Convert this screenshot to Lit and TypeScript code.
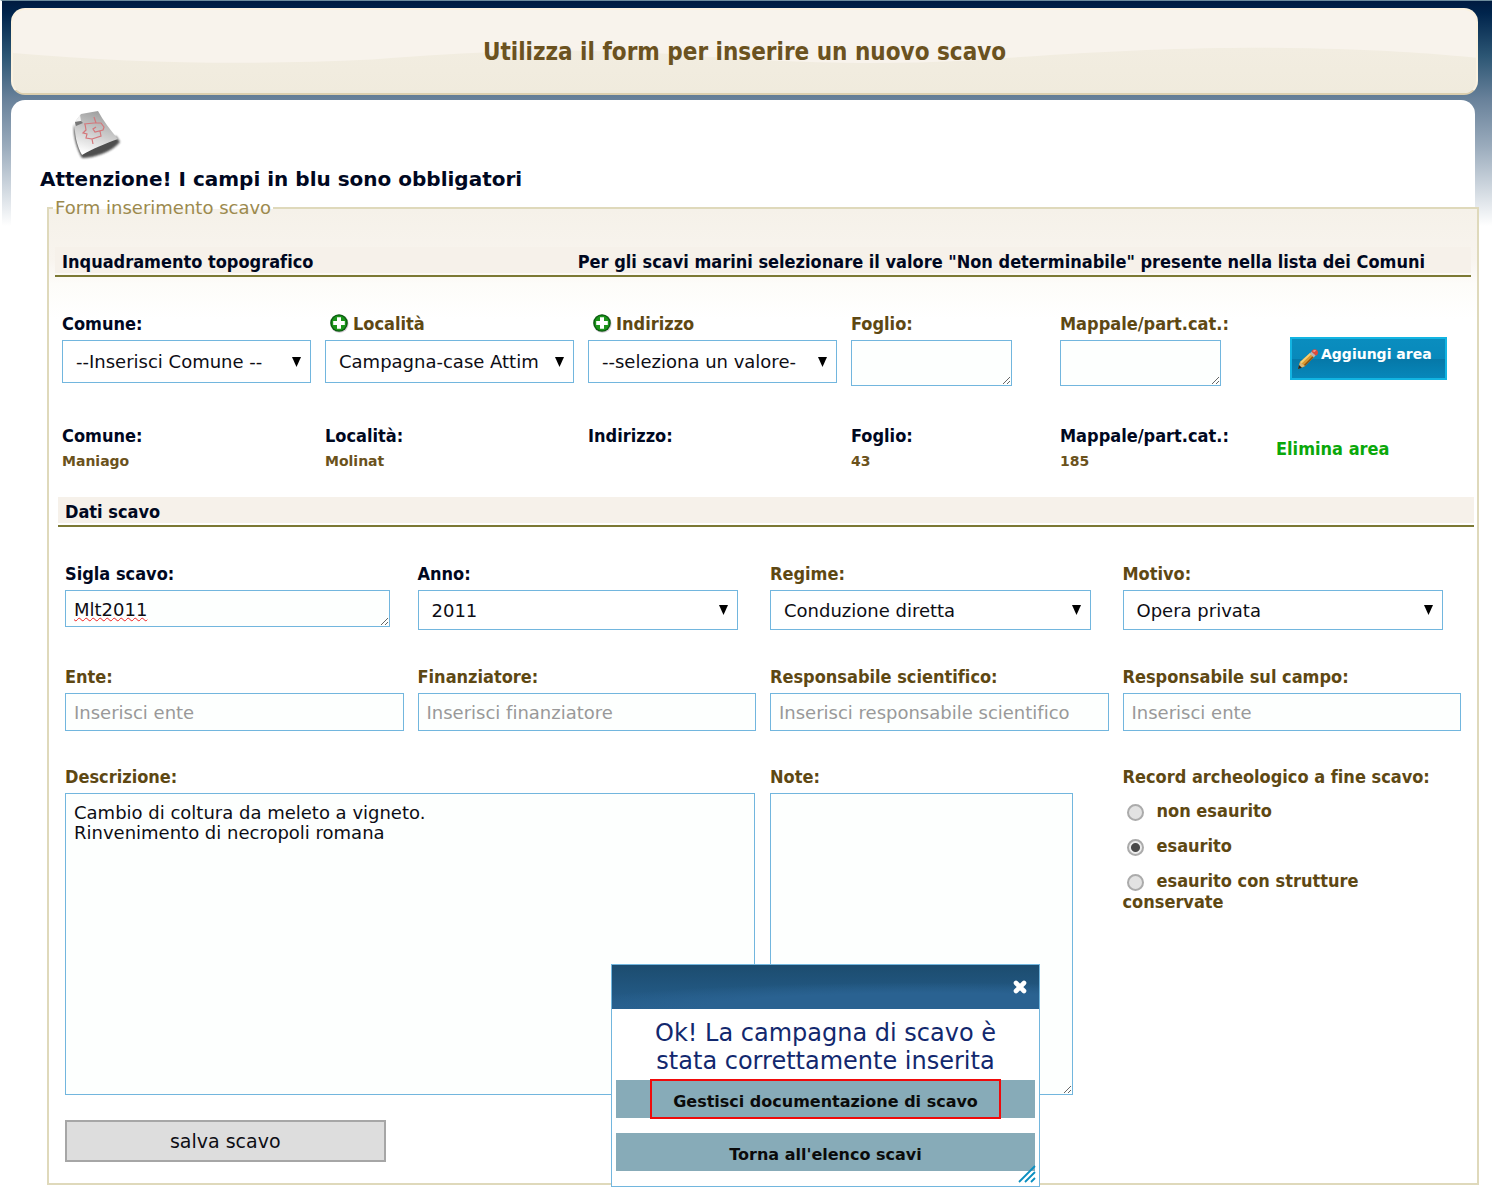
import { LitElement, html, css, svg, nothing } from "lit";
import { customElement } from "lit/decorators.js";
import { classMap } from "lit/directives/class-map.js";

interface FieldOptions {
  required?: boolean;
  addable?: boolean;
}

const sheetIcon = html`
  <svg class="sheet-icon" viewBox="0 0 50 52" aria-hidden="true">
    <defs>
      <linearGradient id="sheet" x1="0.65" y1="0" x2="0.35" y2="1">
        <stop offset="0" stop-color="#9c9c9c" />
        <stop offset="0.5" stop-color="#cbcbcb" />
        <stop offset="1" stop-color="#ffffff" />
      </linearGradient>
      <filter id="soft" x="-20%" y="-20%" width="140%" height="140%">
        <feGaussianBlur stdDeviation="1.3" />
      </filter>
    </defs>
    <path d="M2 14 C1 26 5 39 10 48 C22 48 40 42 48 32 L44 26 L10 42 Z" fill="#222" opacity="0.8" filter="url(#soft)" />
    <path d="M3 12 L9 4 L26 1 C31 10 38 20 46 29 C35 33 20 39 10 45 C5 36 2 24 3 12 Z" fill="url(#sheet)" />
    <path d="M3 12 L8 5 L9 11 Z" fill="#f2f2f2" />
    <path d="M3 12 L9 11 L11 13 L4 16 Z" fill="#777" />
    <path
      d="M22 7 L24 13 M12 14 L22 13 L29 13 L32 17 L31 20 L23 22 L21 19 L24 17 M13 14 L14 20 L11 23 L15 24 L14 28 L20 29 L21 34 M20 29 L29 26 L28 21"
      fill="none" stroke="#d4767a" stroke-width="1.2"
    />
  </svg>
`;

const plusIcon = html`
  <svg class="plus-icon" viewBox="0 0 20 20" aria-hidden="true">
    <circle cx="10.5" cy="10.8" r="9.2" fill="#d3c5d3" opacity="0.8" />
    <circle cx="10" cy="10" r="8.8" fill="#0b5c10" />
    <circle cx="10" cy="10" r="7.4" fill="#1b941a" />
    <path d="M8 4.2 H12 V8 H15.8 V12 H12 V15.8 H8 V12 H4.2 V8 H8 Z" fill="#fff" />
  </svg>
`;

const pencilIcon = html`
  <svg class="pencil-icon" viewBox="0 0 22 22" aria-hidden="true">
    <path d="M1 21 L3 14 L13 5 L17 9 L8 18 Z" fill="#d9982f" />
    <path d="M3 14 L13 5 L14.3 6.3 L4.6 15.6 Z" fill="#f4cf73" />
    <path d="M6.6 17.2 L15.8 8 L17 9 L8 18 Z" fill="#8a5212" />
    <path d="M3 14 L8 18 L4 20 L2 18 Z" fill="#d8b676" />
    <path d="M1 21 L2 17 L5 19.8 Z" fill="#222" />
    <path d="M12.6 5.4 L14.8 3.4 L18.8 7.2 L16.8 9.4 Z" fill="#b9b3b0" />
    <path d="M14.4 3.6 C15.6 1.2 18 0.6 19.9 2.1 C21.8 3.8 21.4 6.4 19 7.8 Z" fill="#df4a3c" />
    <path d="M15.6 3.2 C16.8 1.9 18 1.8 19 2.4 L17.6 4 Z" fill="#f39a8c" />
  </svg>
`;

const closeIcon = html`
  <svg class="close-icon" viewBox="0 0 14 14" aria-hidden="true">
    <path d="M3 3 L11 11 M11 3 L3 11" stroke="#fff" stroke-width="4.6" stroke-linecap="round" />
  </svg>
`;

@customElement("app-root")
export class AppRoot extends LitElement {
  static styles = css`
    :host {
      display: block;
      min-height: 100vh;
      box-sizing: border-box;
      padding: 7px 14px 0 9px;
      border-top: 1px solid #6d8c9c;
      border-left: 2px solid #fff;
      position: relative;
      background: linear-gradient(#001b40 0, #00244c 12px, #2c5674 55px, #68819a 98px, #9aabbc 145px, #ffffff 225px);
      font-family: "DejaVu Sans", Verdana, sans-serif;
      font-size: 18px;
      font-variant-ligatures: none;
      color: #0d0d14;
    }
    *, *::before, *::after { box-sizing: border-box; }

    .banner {
      position: relative;
      display: flex;
      align-items: center;
      justify-content: center;
      height: 87px;
      overflow: hidden;
      border: 2px solid #fbf2e0;
      border-bottom-color: #dccfae;
      border-radius: 14px;
      background: #f8f3ec;
    }
    .wave { position: absolute; inset: 0; width: 100%; height: 100%; }
    .banner h1 {
      position: relative;
      margin: 0;
      font: bold 24px/30px "DejaVu Sans Condensed", "DejaVu Sans", sans-serif;
      font-variant-ligatures: none;
      color: #6b5220;
    }

    .panel {
      margin: 5px 3px 0 0;
      padding: 10px 0 14px 29px;
      border-radius: 14px 14px 0 0;
      background: #fff;
    }
    .sheet-icon { display: block; width: 50px; height: 52px; margin-left: 32px; }
    .warning {
      margin: 3px 0 4px;
      font-weight: bold;
      font-size: 20px;
      line-height: 28px;
      color: #00081f;
    }

    .sheet {
      min-width: 0;
      margin: 0 -4px 0 7px;
      padding: 0 0 21px;
      border: 2px solid #dfd9bb;
      background: linear-gradient(#f5f1e9 0, #f8f4ee 50px, #fdfcf9 75px, #fff 110px);
    }
    .sheet > legend {
      margin-left: 4px;
      padding: 0 2px;
      line-height: 22px;
      color: #9c8a4e;
    }

    .section-title {
      display: flex;
      justify-content: space-between;
      padding: 2px 46px 0 7px;
      border-bottom: 2px solid #7c7934;
      background: linear-gradient(#f6f1ea, #f6f1ea) no-repeat 0 0 / 100% 26px;
      line-height: 26px;
      color: #00081f;
    }
    .section-title, .section-title h2, .label, .remove {
      font-family: "DejaVu Sans Condensed", "DejaVu Sans", sans-serif;
      font-weight: bold;
      font-size: 18px;
    }
    .section-title h2, .section-title p { margin: 0; }
    .topography .section-title { margin: 28px 6px 33px; }
    .details .section-title { margin: 23px 3px 33px 9px; }

    .area-grid {
      display: grid;
      grid-template-columns:
        minmax(0, 263fr) minmax(0, 263fr) minmax(0, 263fr)
        minmax(0, 209fr) minmax(0, 216fr) minmax(0, 195fr);
      row-gap: 36px;
      padding: 0 6px 0 13px;
    }
    .data-grid {
      display: grid;
      grid-template-columns: repeat(4, minmax(0, 1fr));
      row-gap: 33px;
      padding: 0 2px 0 16px;
    }
    .wide { grid-column: span 2; }

    .label {
      display: flex;
      align-items: center;
      height: 26px;
      margin-bottom: 4px;
      white-space: nowrap;
      color: #5e4813;
    }
    .label.required { color: #00081f; }
    .plus {
      display: flex;
      margin: 0 4px;
      padding: 0;
      border: 0;
      background: none;
    }
    .plus-icon { width: 20px; height: 20px; }

    .picker { display: grid; align-items: center; width: calc(100% - 14px); }
    .picker > * { grid-area: 1 / 1; }
    .data-grid .picker { width: calc(100% - 32px); }
    select, input.text, textarea {
      display: block;
      margin: 0;
      border: 1px solid #72b6de;
      border-radius: 0;
      background: #fdfffe;
      font: 18px/20px "DejaVu Sans", sans-serif;
      font-variant-ligatures: none;
      color: #0d0d14;
      outline: none;
    }
    select {
      appearance: none;
      width: 100%;
      height: 43px;
      padding: 0 34px 0 13px;
      overflow: hidden;
      background: #fff;
    }
    .data-grid select { height: 40px; padding-top: 1px; }
    .arrow { justify-self: end; width: 9px; height: 10px; margin-right: 10px; pointer-events: none; }
    textarea { padding: 9px 8px 7px; }
    .short { width: 161px; max-width: 100%; height: 46px; }
    .code {
      width: calc(100% - 28px);
      height: 37px;
      text-decoration: underline wavy #f02020 1px;
      text-decoration-skip-ink: none;
      text-underline-offset: 1px;
      overflow: hidden;
    }
    .description { width: calc(100% - 15px); height: 302px; }
    .notes { width: calc(100% - 50px); height: 302px; }
    input.text { width: calc(100% - 14px); height: 38px; margin-bottom: -1px; padding: 1px 8px 0; }
    input.text::placeholder { color: #999; opacity: 1; }

    .add {
      display: flex;
      align-items: flex-start;
      gap: 2px;
      width: 157px;
      height: 43px;
      margin: 27px 0 0 14px;
      padding: 6px 5px;
      border: 2px solid #12b4e2;
      background: linear-gradient(#0a8dbf 0, #0889bb 50%, #0678a8 51%, #0787ba 100%);
      font: bold 14px/18px "DejaVu Sans", sans-serif;
      color: #fff;
      white-space: nowrap;
    }
    .pencil-icon { flex: none; width: 22px; height: 22px; margin-top: 3px; }

    .fact .label { margin: 0; }
    .fact p { margin: 0; font-weight: bold; font-size: 14px; line-height: 26px; color: #6b521c; }
    .remove { align-self: center; color: #0aa80a; text-decoration: none; }

    .outcome { padding-right: 20px; }
    .outcome .label { margin-bottom: 11px; }
    .outcome label {
      display: block;
      margin-bottom: 14px;
      font: bold 18px/21px "DejaVu Sans Condensed", "DejaVu Sans", sans-serif;
      color: #5e4813;
    }
    .radio {
      appearance: none;
      width: 17px;
      height: 17px;
      margin: 0 13px 0 4px;
      border: 2px solid #ababab;
      border-radius: 50%;
      background: #e2e2e2;
      vertical-align: -4px;
    }
    .radio:checked { background: radial-gradient(circle, #4a4a4a 0 4px, #ececec 5px); }

    .save {
      display: block;
      width: calc((100% - 18px) / 4 - 32px);
      height: 42px;
      margin: 25px 0 0 16px;
      border: 2px solid #a6a6a6;
      background: #ddd;
      font: 19px/24px "DejaVu Sans", sans-serif;
      color: #0d0d14;
    }

    .dialog {
      position: absolute;
      left: 609px;
      top: 963px;
      width: 429px;
      border: 1px solid #72b6de;
      background: #fff;
    }
    .dialog-bar {
      display: flex;
      align-items: center;
      justify-content: flex-end;
      height: 44px;
      padding-right: 12px;
      background: radial-gradient(ellipse 90% 60% at 75% 100%, #2a6291 0, #2a6291 60%, transparent 100%), linear-gradient(#1c4c6f, #265f8d);
    }
    .close { display: flex; padding: 0; border: 0; background: none; }
    .close-icon { width: 14px; height: 14px; }
    .dialog-body { display: flex; flex-direction: column; padding: 10px 4px 15px; }
    .message {
      margin: 0 0 5px;
      padding: 0 30px;
      font-size: 24px;
      line-height: 28px;
      text-align: center;
      color: #12286e;
    }
    .choice {
      display: flex;
      justify-content: center;
      height: 38px;
      padding: 0;
      border: 0;
      background: #87abb8;
      font: bold 16px/44px "DejaVu Sans", sans-serif;
      color: #0b0b0b;
    }
    .choice + .choice { margin-top: 15px; }
    .marked { height: 38px; padding: 0 22px; outline: 2px solid #f00a0a; outline-offset: -1px; }
    .grip { position: absolute; right: 3px; bottom: 3px; width: 18px; height: 18px; }
  `;

  private label(id: string, text: string, { required = false, addable = false }: FieldOptions = {}) {
    return html`
      <div class=${classMap({ label: true, required })}>
        ${addable ? html`<button class="plus" type="button" aria-label="Aggiungi ${text}">${plusIcon}</button>` : nothing}
        <label for=${id}>${text}</label>
      </div>
    `;
  }

  private picker(id: string, text: string, value: string, options?: FieldOptions) {
    return html`
      <div>
        ${this.label(id, text, options)}
        <div class="picker">
          <select id=${id}><option>${value}</option></select>
          <svg class="arrow" viewBox="0 0 9 10" aria-hidden="true"><path d="M0 0 H9 L4.5 10 Z" fill="#000" /></svg>
        </div>
      </div>
    `;
  }

  private area(id: string, text: string, kind: string, value = "", options?: FieldOptions) {
    return html`
      <div class=${classMap({ wide: kind === "description" })}>
        ${this.label(id, text, options)}
        <textarea id=${id} class=${kind} spellcheck="false" .value=${value}></textarea>
      </div>
    `;
  }

  private input(id: string, text: string, placeholder: string) {
    return html`
      <div>
        ${this.label(id, text)}
        <input id=${id} class="text" type="text" placeholder=${placeholder} />
      </div>
    `;
  }

  private fact(name: string, value: string) {
    return html`<div class="fact"><div class="label required">${name}</div><p>${value}</p></div>`;
  }

  private choice(text: string, checked = false) {
    return html`<label><input class="radio" type="radio" name="record" .checked=${checked} />${text}</label>`;
  }

  render() {
    return html`
      <header class="banner">
        <svg class="wave" viewBox="0 0 1467 87" preserveAspectRatio="none" aria-hidden="true">
          <defs>
            <linearGradient id="sand" x1="0" y1="0" x2="0" y2="1">
              <stop offset="0" stop-color="#f2ede1" />
              <stop offset="1" stop-color="#f0ebdd" />
            </linearGradient>
          </defs>
          ${svg`<path d="M0 45 C120 56 240 58 360 52 C480 42 560 40 660 46 C780 56 860 58 960 53 C1100 42 1200 38 1300 40 C1380 42 1430 46 1467 50 V87 H0 Z" fill="url(#sand)" />`}
        </svg>
        <h1>Utilizza il form per inserire un nuovo scavo</h1>
      </header>

      <main class="panel">
        ${sheetIcon}
        <p class="warning">Attenzione! I campi in blu sono obbligatori</p>

        <form @submit=${(e: Event) => e.preventDefault()}>
          <fieldset class="sheet">
            <legend>Form inserimento scavo</legend>

            <section class="topography">
              <div class="section-title">
                <h2>Inquadramento topografico</h2>
                <p>Per gli scavi marini selezionare il valore "Non determinabile" presente nella lista dei Comuni</p>
              </div>
              <div class="area-grid">
                ${this.picker("comune", "Comune:", "--Inserisci Comune --", { required: true })}
                ${this.picker("localita", "Località", "Campagna-case Attim", { addable: true })}
                ${this.picker("indirizzo", "Indirizzo", "--seleziona un valore-", { addable: true })}
                ${this.area("foglio", "Foglio:", "short")}
                ${this.area("mappale", "Mappale/part.cat.:", "short")}
                <div><button class="add" type="button">${pencilIcon}Aggiungi area</button></div>

                ${this.fact("Comune:", "Maniago")}
                ${this.fact("Località:", "Molinat")}
                ${this.fact("Indirizzo:", "")}
                ${this.fact("Foglio:", "43")}
                ${this.fact("Mappale/part.cat.:", "185")}
                <a class="remove" href="#">Elimina area</a>
              </div>
            </section>

            <section class="details">
              <div class="section-title"><h2>Dati scavo</h2></div>
              <div class="data-grid">
                ${this.area("sigla", "Sigla scavo:", "code", "Mlt2011", { required: true })}
                ${this.picker("anno", "Anno:", "2011", { required: true })}
                ${this.picker("regime", "Regime:", "Conduzione diretta")}
                ${this.picker("motivo", "Motivo:", "Opera privata")}

                ${this.input("ente", "Ente:", "Inserisci ente")}
                ${this.input("finanziatore", "Finanziatore:", "Inserisci finanziatore")}
                ${this.input("scientifico", "Responsabile scientifico:", "Inserisci responsabile scientifico")}
                ${this.input("campo", "Responsabile sul campo:", "Inserisci ente")}

                ${this.area("descrizione", "Descrizione:", "description", "Cambio di coltura da meleto a vigneto.\nRinvenimento di necropoli romana")}
                ${this.area("note", "Note:", "notes")}
                <div class="outcome" role="radiogroup" aria-labelledby="record-label">
                  <div class="label" id="record-label">Record archeologico a fine scavo:</div>
                  ${this.choice("non esaurito")}
                  ${this.choice("esaurito", true)}
                  ${this.choice("esaurito con strutture conservate")}
                </div>
              </div>
              <button class="save" type="submit">salva scavo</button>
            </section>
          </fieldset>
        </form>
      </main>

      <div class="dialog" role="dialog" aria-labelledby="message">
        <div class="dialog-bar"><button class="close" type="button" aria-label="Chiudi">${closeIcon}</button></div>
        <div class="dialog-body">
          <p class="message" id="message">Ok! La campagna di scavo è stata correttamente inserita</p>
          <button class="choice" type="button"><span class="marked">Gestisci documentazione di scavo</span></button>
          <button class="choice" type="button">Torna all'elenco scavi</button>
        </div>
        <svg class="grip" viewBox="0 0 18 18" aria-hidden="true">
          <path d="M1 17 L17 1 M7 17 L17 7 M13 17 L17 13" stroke="#0a8fc0" stroke-width="1.8" fill="none" />
        </svg>
      </div>
    `;
  }
}
